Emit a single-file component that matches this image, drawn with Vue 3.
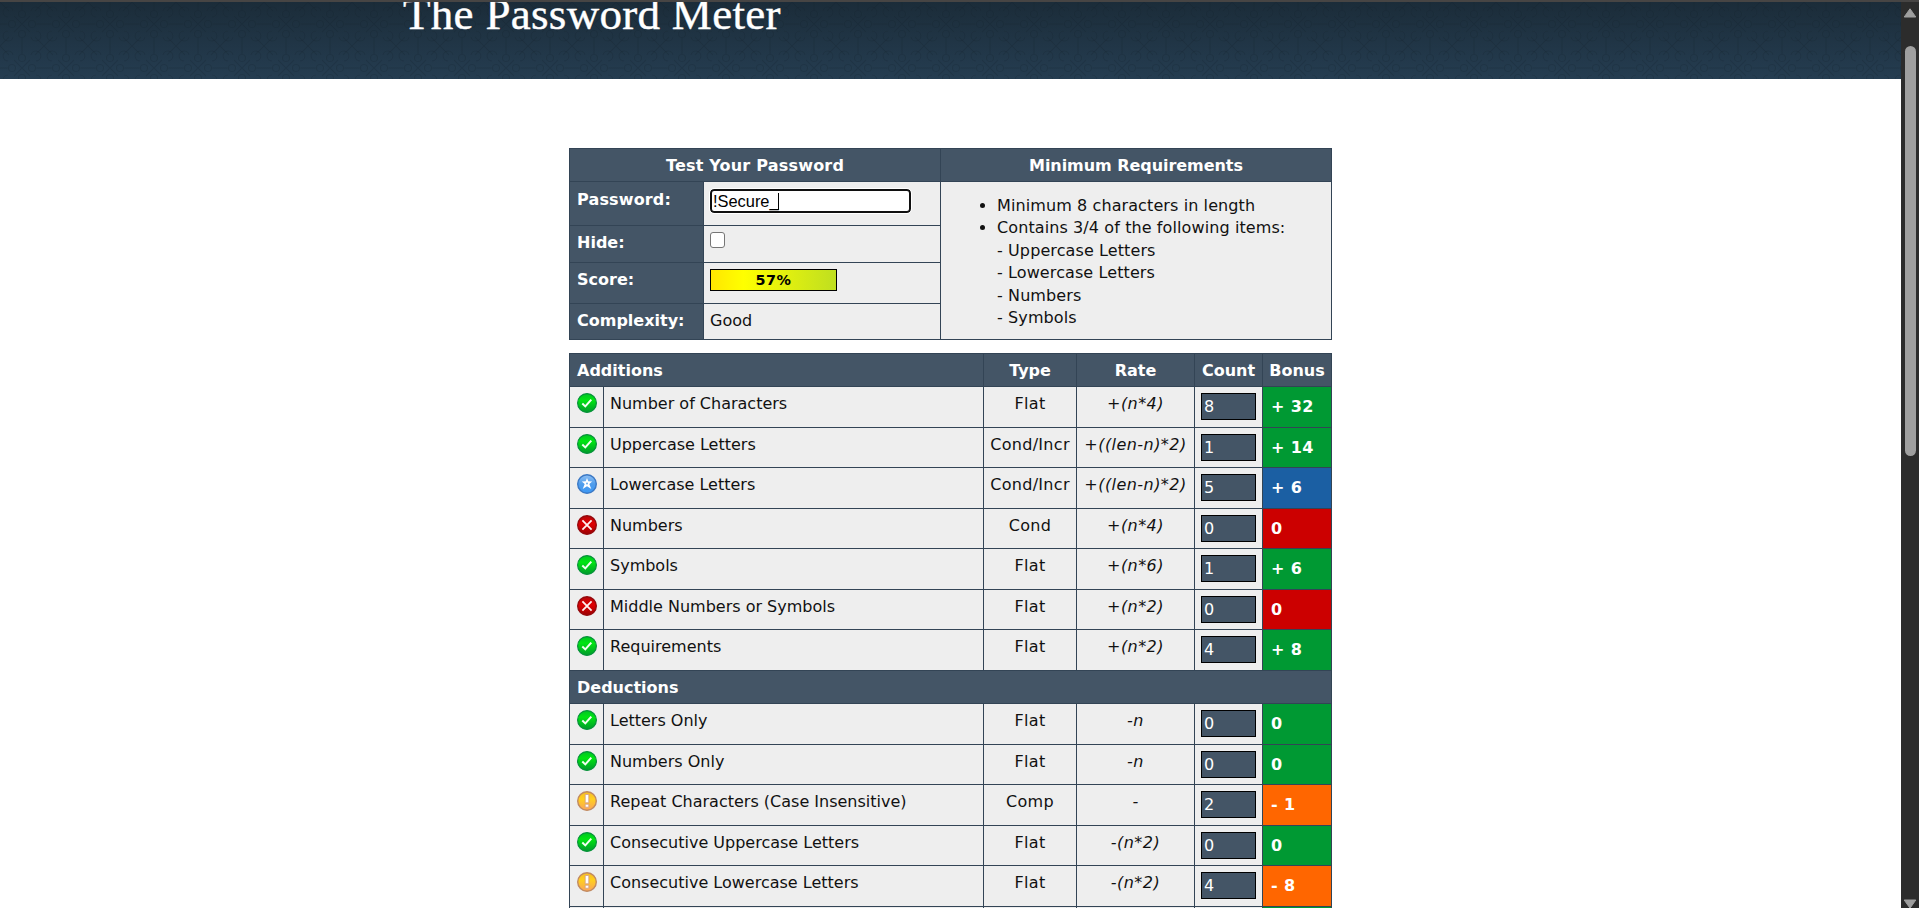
<script setup>
const fields = ['Password:', 'Hide:', 'Score:', 'Complexity:']
const additions = [
  ['pass', 'Number of Characters', 'Flat', '+(n*4)', '8', '+ 32'],
  ['pass', 'Uppercase Letters', 'Cond/Incr', '+((len-n)*2)', '1', '+ 14'],
  ['exceed', 'Lowercase Letters', 'Cond/Incr', '+((len-n)*2)', '5', '+ 6'],
  ['fail', 'Numbers', 'Cond', '+(n*4)', '0', '0'],
  ['pass', 'Symbols', 'Flat', '+(n*6)', '1', '+ 6'],
  ['fail', 'Middle Numbers or Symbols', 'Flat', '+(n*2)', '0', '0'],
  ['pass', 'Requirements', 'Flat', '+(n*2)', '4', '+ 8'],
]
const deductions = [
  ['pass', 'Letters Only', 'Flat', '-n', '0', '0'],
  ['pass', 'Numbers Only', 'Flat', '-n', '0', '0'],
  ['warn', 'Repeat Characters (Case Insensitive)', 'Comp', '-', '2', '- 1'],
  ['pass', 'Consecutive Uppercase Letters', 'Flat', '-(n*2)', '0', '0'],
  ['warn', 'Consecutive Lowercase Letters', 'Flat', '-(n*2)', '4', '- 8'],
]
const groups = [additions, deductions]
</script>

<template>
  <div class="window">
    <div class="page">
      <header class="banner">
        <svg class="ornament" width="1901" height="77" aria-hidden="true">
          <defs>
            <pattern id="curls" width="44" height="44" patternUnits="userSpaceOnUse">
              <g fill="none" stroke="#0d1c28" stroke-opacity=".2" stroke-width="1.2">
                <path d="M0 22h8M36 22h8M22 0v8M22 36v8M14 14l16 16M30 14l-16 16" />
                <path d="M0 0l9 9M44 0l-9 9M0 44l9-9M44 44l-9-9" />
                <path d="M13 9a5 5 0 1 0-5 6M31 9a5 5 0 1 1 5 6M13 35a5 5 0 1 1-5-6M31 35a5 5 0 1 0 5-6" />
                <circle cx="22" cy="12" r="3.5" /><circle cx="22" cy="32" r="3.5" />
                <circle cx="12" cy="22" r="3.5" /><circle cx="32" cy="22" r="3.5" />
              </g>
            </pattern>
          </defs>
          <rect width="1901" height="77" fill="url(#curls)" />
        </svg>
        <h1>The Password Meter</h1>
      </header>

      <main>
        <section class="grid test">
          <div class="head center test-title">Test Your Password</div>
          <div class="head center req-title">Minimum Requirements</div>
          <div v-for="(f, i) in fields" :key="f" class="head field" :class="'f' + i">{{ f }}</div>
          <div class="cell v0"><div class="pwd">!Secure_<i class="caret"></i></div></div>
          <div class="cell v1"><div class="check"></div></div>
          <div class="cell v2"><div class="score">57%</div></div>
          <div class="cell v3">Good</div>
          <div class="cell reqs">
            <ul>
              <li>Minimum 8 characters in length</li>
              <li>Contains 3/4 of the following items:<br>- Uppercase Letters<br>- Lowercase Letters<br>- Numbers<br>- Symbols</li>
            </ul>
          </div>
        </section>

        <section class="grid results">
          <div class="head span2">Additions</div>
          <div class="head center">Type</div>
          <div class="head center">Rate</div>
          <div class="head center">Count</div>
          <div class="head center">Bonus</div>
          <template v-for="(rows, g) in groups" :key="g">
            <div v-if="g" class="head span6">Deductions</div>
            <template v-for="r in rows" :key="r[1]">
              <div class="cell icon">
                <svg v-if="r[0] === 'pass'" width="20" height="20" viewBox="0 0 20 20">
                  <defs><linearGradient id="gp" x1="0" y1="0" x2="0" y2="1"><stop offset="0" stop-color="#00c424" /><stop offset=".35" stop-color="#00e512" /><stop offset="1" stop-color="#009a2c" /></linearGradient></defs>
                  <circle cx="10" cy="10" r="9.4" fill="url(#gp)" stroke="#07913b" stroke-width="1.2" />
                  <path d="M5.3 10.6l3 2.8 6-6.8" fill="none" stroke="#f1fff1" stroke-width="2" />
                </svg>
                <svg v-else-if="r[0] === 'exceed'" width="20" height="20" viewBox="0 0 20 20">
                  <defs><linearGradient id="ge" x1="0" y1="0" x2="0" y2="1"><stop offset="0" stop-color="#8fc0f4" /><stop offset=".5" stop-color="#4f9dec" /><stop offset="1" stop-color="#3c98f5" /></linearGradient></defs>
                  <circle cx="10" cy="10" r="9.3" fill="url(#ge)" stroke="#3b78c4" stroke-width="1.4" />
                  <path d="M10 4l1.3 3.3 3.9.2-2.9 2.5 2 5L10 12.2 5.7 15l2-5-2.9-2.5 3.9-.2z" fill="#fff" />
                  <circle cx="10" cy="9.5" r="1" fill="#69acef" />
                </svg>
                <svg v-else-if="r[0] === 'fail'" width="20" height="20" viewBox="0 0 20 20">
                  <defs><linearGradient id="gf" x1="0" y1="0" x2="0" y2="1"><stop offset="0" stop-color="#b70508" /><stop offset=".45" stop-color="#df0003" /><stop offset="1" stop-color="#9b0002" /></linearGradient></defs>
                  <circle cx="10" cy="10" r="9.3" fill="url(#gf)" stroke="#94090d" stroke-width="1.4" />
                  <path d="M5.4 5.4l9.2 9.2M14.6 5.4l-9.2 9.2" stroke="#fff2f2" stroke-width="1.8" />
                </svg>
                <svg v-else width="20" height="20" viewBox="0 0 20 20">
                  <defs><linearGradient id="gw" x1="0" y1="0" x2="0" y2="1"><stop offset="0" stop-color="#f7bd24" /><stop offset=".4" stop-color="#ffd01f" /><stop offset="1" stop-color="#fba35a" /></linearGradient></defs>
                  <circle cx="10" cy="10" r="9.3" fill="url(#gw)" stroke="#c08a62" stroke-width="1.4" />
                  <path d="M8.2 3.5h3.6v8.3H8.2zM8.2 13.2h3.6v3H8.2z" fill="#fff" stroke="#d39a83" stroke-width=".8" />
                </svg>
              </div>
              <div class="cell">{{ r[1] }}</div>
              <div class="cell center type">{{ r[2] }}</div>
              <div class="cell center rate">{{ r[3] }}</div>
              <div class="cell"><div class="count">{{ r[4] }}</div></div>
              <div class="bonus" :class="r[0]">{{ r[5] }}</div>
            </template>
          </template>
          <div class="cell"></div><div class="cell"></div><div class="cell"></div>
          <div class="cell"></div><div class="cell"></div><div class="bonus pass"></div>
        </section>
      </main>
    </div>

    <aside class="scrollbar">
      <svg class="up" width="14" height="10" viewBox="0 0 14 10"><path d="M7 .8L12.8 9H1.2z" fill="#9f9f9f" stroke="#9f9f9f" stroke-linejoin="round" /></svg>
      <div class="thumb"></div>
      <svg class="down" width="14" height="10" viewBox="0 0 14 10"><path d="M1.2 1h11.6L7 9.2z" fill="#9f9f9f" stroke="#9f9f9f" stroke-linejoin="round" /></svg>
    </aside>
  </div>
</template>

<style>
html, body { margin: 0; overflow: hidden; background: #fff; }
</style>

<style scoped>
.window {
  box-sizing: border-box;
  width: 1919px;
  height: 908px;
  display: flex;
  overflow: hidden;
  border-top: 2px solid #474544;
  background: #fff;
  color: #111;
  font: 16px/22px Verdana, "DejaVu Sans", sans-serif;
}
.page { width: 1901px; overflow: hidden; }
.banner {
  position: relative;
  height: 77px;
  overflow: hidden;
  background: linear-gradient(#1b2c39, #253d51);
}
.ornament { position: absolute; inset: 0; }
h1 {
  position: relative;
  margin: -13px 0 0 403px;
  color: #fff;
  font: 400 45px/50px Georgia, "Liberation Serif", serif;
  letter-spacing: .3px;
  -webkit-text-stroke: .4px #fff;
  white-space: nowrap;
}
main { width: 763px; margin: 69px 0 0 569px; }
.grid {
  display: grid;
  box-sizing: border-box;
  width: 763px;
  gap: 1px;
  padding: 1px;
  background: #334455;
}
.grid > div { box-sizing: border-box; min-width: 0; white-space: nowrap; }
.test {
  grid-template-columns: 133px 236px 390px;
  grid-template-rows: 32px 43px 36px 40px 35px;
}
.head {
  padding: 6px 6px 4px 7px;
  background: #445566;
  color: #fff;
  font-weight: 700;
}
.center { text-align: center; }
.head.center { padding-left: 0; padding-right: 0; }
.test-title { grid-area: 1 / 1 / 2 / 3; letter-spacing: .2px; }
.req-title { grid-area: 1 / 3; letter-spacing: -.05px; }
.f0 { grid-area: 2 / 1; padding-top: 7px; letter-spacing: .15px; }
.f1 { grid-area: 3 / 1; }
.f2 { grid-area: 4 / 1; }
.f3 { grid-area: 5 / 1; }
.v0 { grid-area: 2 / 2; }
.v1 { grid-area: 3 / 2; }
.v2 { grid-area: 4 / 2; }
.v3 { grid-area: 5 / 2; }
.reqs { grid-area: 2 / 3 / 6 / 4; }
.cell { padding: 6px; background: #eee; }
.center.cell { padding-left: 0; padding-right: 0; }
.pwd {
  display: flex;
  align-items: center;
  box-sizing: border-box;
  width: 201px;
  height: 24px;
  margin-top: 1px;
  padding-left: 1px;
  border: 2px solid #101010;
  border-radius: 4px;
  outline: 1px solid #fff;
  background: #fff;
  color: #000;
  font: 16.4px/20px Arial, "Liberation Sans", sans-serif;
}
.caret { width: 1px; height: 17px; margin-left: -1px; background: #000; }
.check {
  box-sizing: border-box;
  width: 15px;
  height: 16px;
  border: 1px solid #767676;
  border-radius: 3px;
  background: #fff;
}
.score {
  box-sizing: border-box;
  width: 127px;
  height: 22px;
  border: 1px solid #000;
  background: linear-gradient(90deg, #ffe600, #ffff00 26%, #bfdf20);
  color: #000;
  font-size: 14.4px;
  font-weight: 700;
  letter-spacing: .5px;
  line-height: 20px;
  text-align: center;
}
ul { margin: 7px 0 0; padding: 0 0 0 50px; line-height: 22.4px; letter-spacing: .1px; }
.results {
  margin-top: 13px;
  grid-template-columns: 33px 379px 92px 117px 67px 68px;
  grid-template-rows: 32px 40px 39px 40px 39px 40px 39px 40px 32px 40px 39px 40px 39px 40px 40px;
}
.span2 { grid-column: span 2; }
.span6 { grid-column: span 6; }
.icon svg { display: block; margin-left: 1px; }
.type { letter-spacing: .3px; }
.rate { font-style: italic; letter-spacing: .45px; }
.count {
  box-sizing: border-box;
  width: 55px;
  height: 27px;
  padding: 2px 0 0 2px;
  border: 1px solid #000;
  background: #445566;
  color: #fff;
}
.bonus { padding: 9px 0 0 8px; color: #fff; font-weight: 700; letter-spacing: .4px; }
.bonus.pass { background: #009933; }
.bonus.exceed { background: #1b5fa3; }
.bonus.fail { background: #cc0000; }
.bonus.warn { background: #ff6600; }
.scrollbar {
  box-sizing: border-box;
  position: relative;
  width: 18px;
  height: 906px;
  padding-top: 44px;
  background: #2c2c2c;
}
.thumb { width: 11px; height: 410px; margin-left: 4px; border-radius: 6px; background: #9f9f9f; }
.up { position: absolute; top: 6px; left: 2px; }
.down { position: absolute; bottom: -1px; left: 2px; }
</style>
